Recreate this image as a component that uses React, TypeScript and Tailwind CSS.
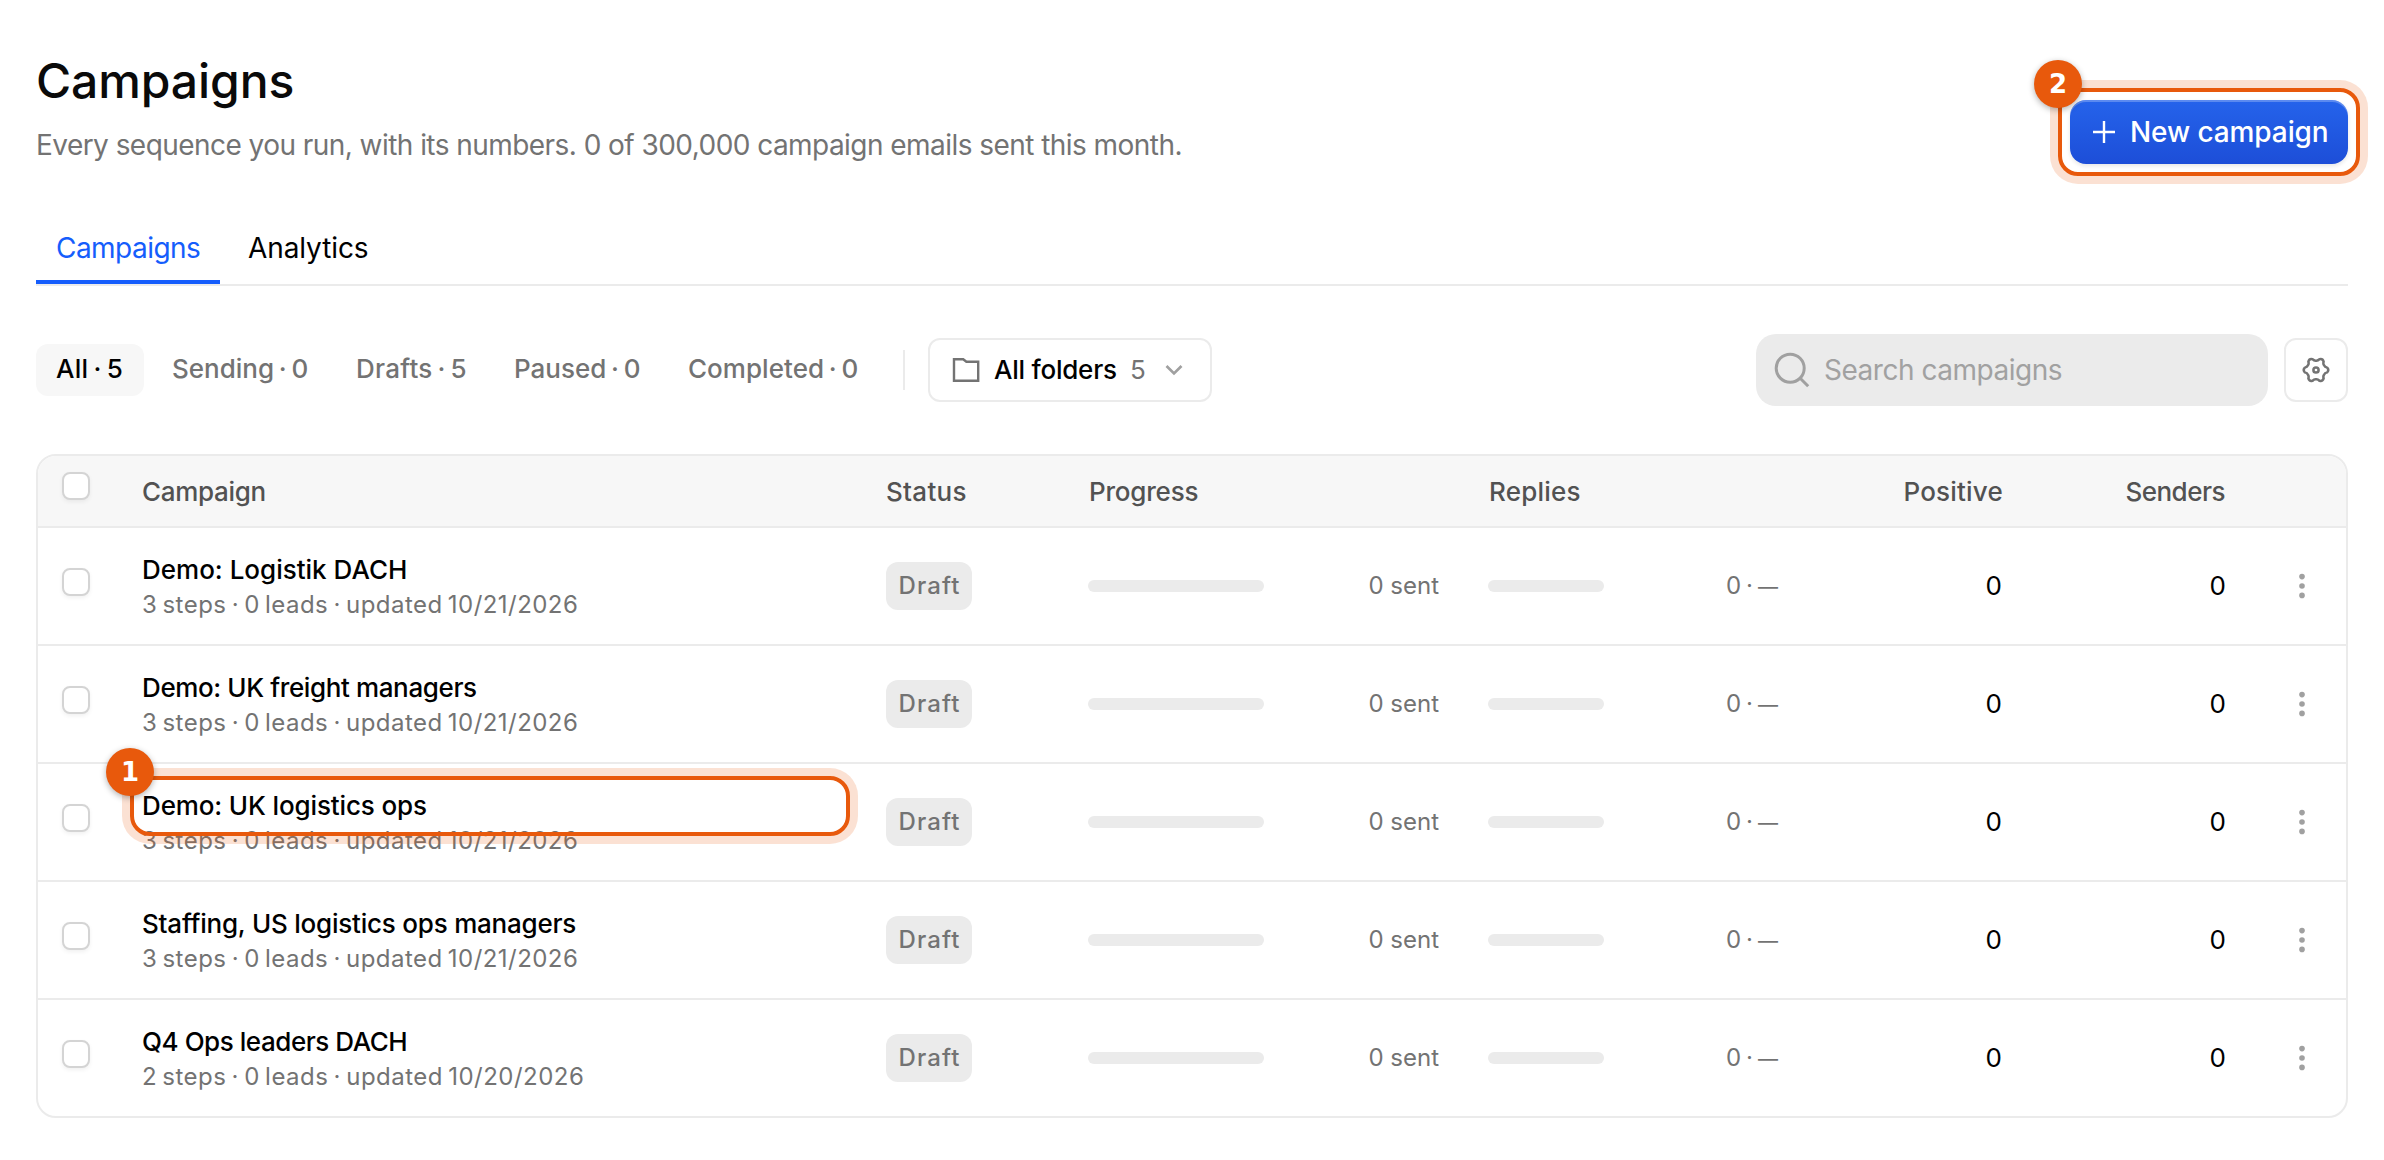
import React from 'react';

type Row = { name: string; nameTracking: string; meta: string; metaTracking: string; marked?: boolean };

const rows: Row[] = [
  { name: 'Demo: Logistik DACH', nameTracking: 'tracking-[0px]', meta: '3 steps · 0 leads · updated 10/21/2026', metaTracking: 'tracking-[0.46px]' },
  { name: 'Demo: UK freight managers', nameTracking: 'tracking-[-0.38px]', meta: '3 steps · 0 leads · updated 10/21/2026', metaTracking: 'tracking-[0.46px]' },
  { name: 'Demo: UK logistics ops', nameTracking: 'tracking-[-0.13px]', meta: '3 steps · 0 leads · updated 10/21/2026', metaTracking: 'tracking-[0.46px]', marked: true },
  { name: 'Staffing, US logistics ops managers', nameTracking: 'tracking-[-0.22px]', meta: '3 steps · 0 leads · updated 10/21/2026', metaTracking: 'tracking-[0.46px]' },
  { name: 'Q4 Ops leaders DACH', nameTracking: 'tracking-[-0.45px]', meta: '2 steps · 0 leads · updated 10/20/2026', metaTracking: 'tracking-[0.48px]' },
];

const filters = [
  { label: 'All · 5', cls: 'w-[108px] bg-[#f7f7f7] text-black tracking-[0.3px]' },
  { label: 'Sending · 0', cls: 'w-[176px] text-[#737373] tracking-[0px]' },
  { label: 'Drafts · 5', cls: 'w-[150px] text-[#737373] tracking-[0.25px]' },
  { label: 'Paused · 0', cls: 'w-[166px] text-[#737373] tracking-[0px]' },
  { label: 'Completed · 0', cls: 'w-[210px] text-[#737373] tracking-[0.04px]' },
];

const GRID =
  'grid grid-cols-[103px_745px_202px_352px_48px_292px_224px_224px_118px] items-center';

function gearPath() {
  const pt = (deg: number, r: number) => {
    const a = (deg * Math.PI) / 180;
    return `${(14 + r * Math.cos(a)).toFixed(2)} ${(14 + r * Math.sin(a)).toFixed(2)}`;
  };
  let d = `M${pt(-30, 9.3)}`;
  for (let k = 0; k < 6; k++) {
    const a = k * 60;
    d += `Q${pt(a - 18, 9.3)} ${pt(a - 12, 11.4)}Q${pt(a, 13.4)} ${pt(a + 12, 11.4)}Q${pt(a + 18, 9.3)} ${pt(a + 30, 9.3)}`;
  }
  return d + 'Z';
}

function Marker({ n, className }: { n: string; className: string }) {
  return (
    <div
      className={`pointer-events-none absolute rounded-[20px] border-4 border-[#e8590c] shadow-[0_0_0_8px_rgba(232,89,12,0.18)] ${className}`}
    >
      <span className="absolute -left-7 -top-8 flex size-12 items-center justify-center rounded-full bg-[#e8590c] font-['DejaVu_Sans',sans-serif] text-[26px] font-bold leading-none text-white shadow-[0_2px_6px_rgba(0,0,0,0.3)]">
        {n}
      </span>
    </div>
  );
}

function Checkbox({ className }: { className: string }) {
  return (
    <span
      className={`block size-7 rounded-[8px] border-2 border-[#d4d4d4] bg-white shadow-[0_2px_4px_rgba(0,0,0,0.06)] ${className}`}
    />
  );
}

export default function App() {
  return (
    <div className="h-[1160px] w-[2384px] overflow-hidden bg-white px-9 pt-11 font-['Inter',sans-serif] text-[#0a0a0a]">
      <header className="flex h-[124px] justify-between">
        <div>
          <h1 className="h-[73px] text-[48px] font-medium leading-[73px] tracking-[-0.09px]">Campaigns</h1>
          <p className="mt-2 text-[28px] leading-10 tracking-[-0.55px] text-[#737373]">
            Every sequence you run, with its numbers. 0 of 300,000 campaign emails sent this month.
          </p>
        </div>
        <div className="relative mt-14 h-16 w-[278px]">
          <button className="flex h-16 w-full items-center rounded-[16px] bg-gradient-to-b from-[#2563eb] to-[#1d4ed8] pl-[23px] text-[28px] font-medium tracking-[-0.1px] text-white shadow-[inset_0_2px_0_rgba(255,255,255,0.25),0_2px_4px_rgba(0,0,0,0.1)]">
            <svg className="size-[22px]" viewBox="0 0 22 22" fill="none" stroke="#fff" strokeWidth="2.4">
              <path d="M11 0v22M0 11h22" />
            </svg>
            <span className="ml-[15px] whitespace-nowrap">New campaign</span>
          </button>
          <Marker n="2" className="-inset-3" />
        </div>
      </header>

      <nav className="mt-[44px] flex h-[74px] border-b-2 border-[#ebebeb] text-[28px] leading-[73px]">
        <div className="h-[72px] w-[184px] border-b-4 border-[#155dfc] pl-5 tracking-[-0.54px] text-[#155dfc]">Campaigns</div>
        <div className="pl-7 tracking-[-0.1px] text-black">Analytics</div>
      </nav>

      <div className="mt-12 flex h-[72px] items-center justify-between">
        <div className="flex items-center text-[26px] font-medium">
          <div className="flex gap-2">
            {filters.map((f) => (
              <div
                key={f.label}
                className={`h-[52px] whitespace-nowrap rounded-[12px] pl-5 leading-[50px] [word-spacing:-2.2px] ${f.cls}`}
              >
                {f.label}
              </div>
            ))}
          </div>
          <div className="ml-[25px] h-10 w-0.5 bg-[#ebebeb]" />
          <div className="ml-[23px] flex h-16 w-[284px] items-center rounded-[12px] border-2 border-[#ebebeb] pl-[22px]">
            <svg className="size-7" viewBox="0 0 28 28" fill="none" stroke="#737373" strokeWidth="2.4">
              <path d="M2 3.2h9.2l3.2 2.6h11.8v18.9H2z" />
            </svg>
            <span className="mb-0.5 ml-[14px] w-[122px] whitespace-nowrap tracking-[-0.23px] text-black">All folders</span>
            <span className="mb-0.5 ml-[14px] w-[15px] font-normal text-[#737373]">5</span>
            <svg className="ml-[19px] h-3 w-5" viewBox="0 0 20 12" fill="none" stroke="#a0a0a0" strokeWidth="2.7">
              <path d="M2.5 2l7.5 7.4L17.5 2" />
            </svg>
          </div>
        </div>
        <div className="flex items-center gap-4">
          <div className="flex h-[72px] w-[512px] items-center rounded-[20px] bg-[#ebebeb] pl-[18px]">
            <svg className="size-9" viewBox="0 0 36 36" fill="none" stroke="#a0a0a0" strokeWidth="3">
              <circle cx="16.2" cy="16.2" r="14" />
              <path d="M26.2 26.2l8 8" />
            </svg>
            <span className="ml-[14px] text-[28px] tracking-[-0.48px] text-[#a1a1a1]">Search campaigns</span>
          </div>
          <div className="flex size-16 items-center justify-center rounded-[12px] border-2 border-[#ebebeb]">
            <svg className="size-7" viewBox="0 0 28 28" fill="none" stroke="#737373" strokeWidth="2.5" strokeLinejoin="round">
              <path d={gearPath()} />
              <circle cx="14" cy="14" r="2.6" />
            </svg>
          </div>
        </div>
      </div>

      <div className="mt-12 h-[664px] rounded-[20px] border-2 border-[#ebebeb]">
        <div className={`${GRID} h-[72px] rounded-t-[18px] border-b-2 border-[#ebebeb] bg-[#f7f7f7] text-[26px] font-medium text-[#525252]`}>
          <Checkbox className="mb-[10px] ml-6" />
          <span className="pl-px tracking-[-0.3px]">Campaign</span>
          <span className="tracking-[0.3px]">Status</span>
          <span className="pl-px tracking-[-0.2px]">Progress</span>
          <span />
          <span className="pl-px tracking-[0.2px]">Replies</span>
          <span className="pr-px text-right tracking-[0.2px]">Positive</span>
          <span className="pr-[3px] text-right tracking-[-0.5px]">Senders</span>
          <span />
        </div>
        {rows.map((r) => (
          <div key={r.name} className={`${GRID} h-[118px] border-b-2 border-[#ebebeb] last:border-b-0 last:h-[116px]`}>
            <Checkbox className="mb-2 ml-6" />
            <div className="relative pl-px pt-px">
              <div className={`h-9 text-[26px] font-medium leading-9 text-black ${r.nameTracking}`}>{r.name}</div>
              <div className={`h-[34px] text-[24px] leading-[34px] text-[#737373] [word-spacing:-2px] ${r.metaTracking}`}>{r.meta}</div>
              {r.marked && <Marker n="1" className="-left-[11px] -top-[11px] h-[60px] w-[720px]" />}
            </div>
            <span className="flex h-12 w-[86px] items-center justify-center rounded-[12px] bg-[#ebebeb] pl-px text-[24px] font-medium tracking-[1.1px] text-[#737373]">
              Draft
            </span>
            <div className="flex items-center justify-between text-[24px] text-[#737373]">
              <span className="h-3 w-44 rounded-full bg-[#ebebeb]" />
              <span className="pr-px">0 sent</span>
            </div>
            <span />
            <div className="flex items-center justify-between text-[24px] text-[#737373]">
              <span className="h-3 w-[116px] rounded-full bg-[#ebebeb]" />
              <span className="pr-[3px] tracking-[-0.9px]">
                0 · <span className="text-[20px]">—</span>
              </span>
            </div>
            <span className="pb-0.5 pr-0.5 text-right text-[26px] text-black">0</span>
            <span className="pb-0.5 pr-0.5 text-right text-[26px] text-black">0</span>
            <svg className="ml-[68px] h-7 w-3" viewBox="0 0 12 28" fill="#a0a0a0">
              <circle cx="6" cy="4.6" r="2.8" />
              <circle cx="6" cy="14" r="2.8" />
              <circle cx="6" cy="23.4" r="2.8" />
            </svg>
          </div>
        ))}
      </div>
    </div>
  );
}
